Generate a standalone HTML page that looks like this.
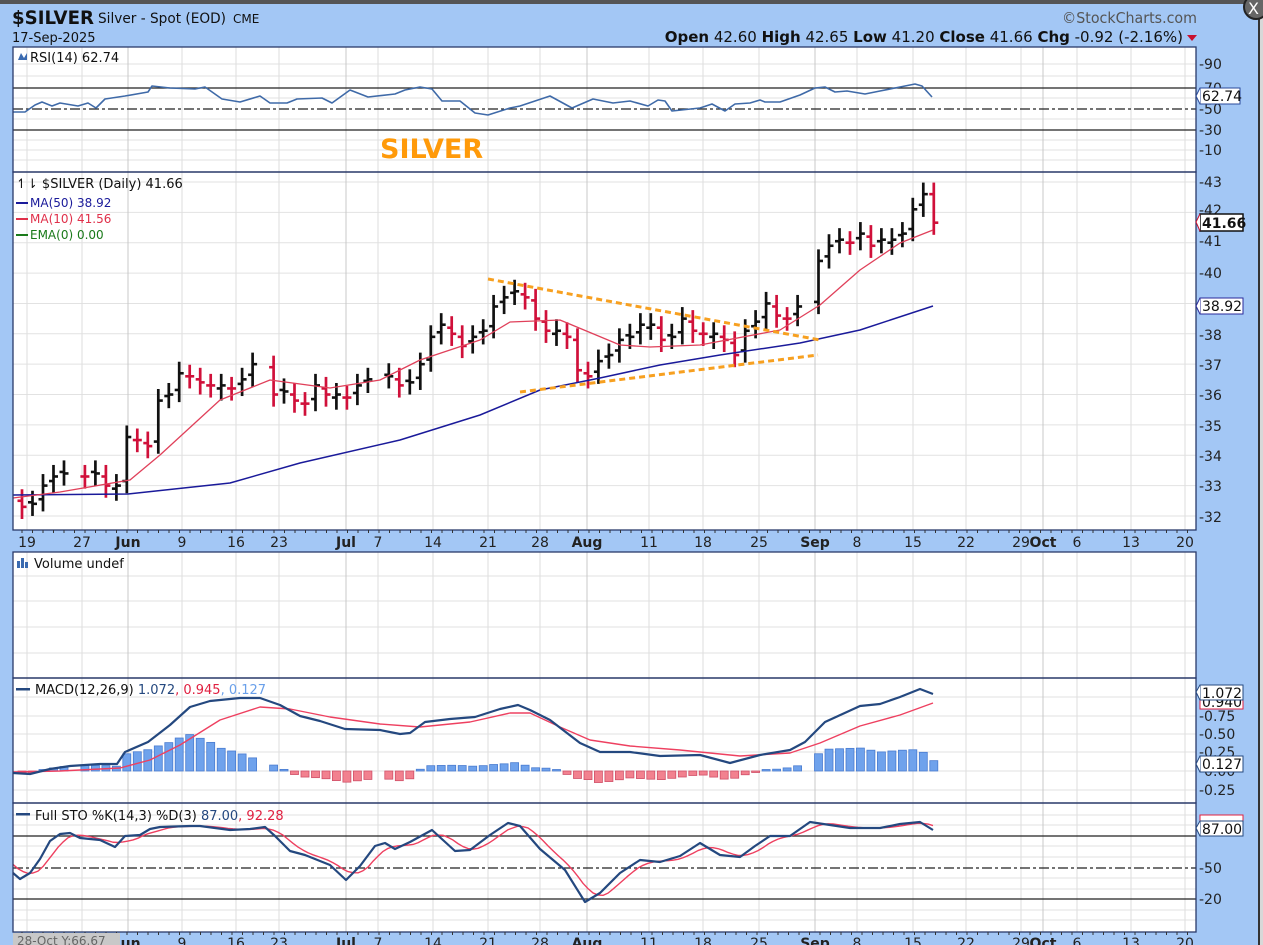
<!DOCTYPE html>
<html><head><meta charset="utf-8">
<style>
html,body{margin:0;padding:0;width:1263px;height:945px;overflow:hidden;background:#a3c7f5;font-family:"Liberation Sans",sans-serif}
svg{position:absolute;left:0;top:0}
text{font-family:"DejaVu Sans","Liberation Sans",sans-serif}
.ax{font-family:"Liberation Sans",sans-serif;font-size:14px;fill:#222}
.lg{font-family:"DejaVu Sans",sans-serif;font-size:13px}
</style></head><body>
<svg id="s" width="1263" height="945" xmlns="http://www.w3.org/2000/svg">
<rect x="0" y="0" width="1263" height="945" fill="#a3c7f5"/>
<rect x="0" y="0" width="1263" height="4" fill="#555"/>
<rect x="1258" y="0" width="2" height="945" fill="#333"/>
<rect x="1260" y="0" width="3" height="945" fill="#d8d8d8"/>
<circle cx="1256" cy="7" r="12" fill="#666" stroke="#222" stroke-width="2"/>
<text x="1248" y="14" font-size="16" fill="#fff" font-family="Liberation Sans">X</text>
<!-- header -->
<text x="12" y="24" font-size="19" font-weight="bold" fill="#111" font-family="Liberation Sans" textLength="82" lengthAdjust="spacingAndGlyphs">$SILVER</text>
<text x="98" y="23" font-size="14" fill="#111" font-family="Liberation Sans" textLength="128" lengthAdjust="spacingAndGlyphs">Silver - Spot (EOD)</text>
<text x="233" y="23" font-size="12" fill="#111" font-family="DejaVu Sans">CME</text>
<text x="12" y="42" font-size="13" fill="#111" font-family="Liberation Sans">17-Sep-2025</text>
<text x="1062" y="23" font-size="15" fill="#555" font-family="Liberation Sans" textLength="135" lengthAdjust="spacingAndGlyphs">©StockCharts.com</text>
<text x="1183" y="42" font-size="15" fill="#111" text-anchor="end" font-family="Liberation Sans"><tspan font-weight="bold">Open</tspan> 42.60  <tspan font-weight="bold">High</tspan> 42.65  <tspan font-weight="bold">Low</tspan> 41.20  <tspan font-weight="bold">Close</tspan> 41.66  <tspan font-weight="bold">Chg</tspan> -0.92 (-2.16%)</text>
<polygon points="1187,35 1197,35 1192,41" fill="#c8102e"/>
<g id="g"></g>
</svg>
<script>
const S=document.getElementById('g');const NS='http://www.w3.org/2000/svg';
function el(t,a,p){const e=document.createElementNS(NS,t);for(const k in a)e.setAttribute(k,a[k]);(p||S).appendChild(e);return e;}
function pl(pts,st,w,extra){const a={points:pts.map(p=>p.join(',')).join(' '),fill:'none',stroke:st,'stroke-width':w||1.5,'stroke-linejoin':'round'};Object.assign(a,extra||{});return el('polyline',a);}
const L=13,R=1196;
const panels=[[47,172],[172,530],[552,678],[678,803],[803,932]];
const vx=[27,82,128,182,236,279,346,378,433,488,540,587,649,703,759,815,857,913,966,1021,1043,1077,1131,1185];
panels.forEach(p=>el('rect',{x:L,y:p[0],width:R-L,height:p[1]-p[0],fill:'#fff'}));
function hg(ys){ys.forEach(y=>el('line',{x1:L,x2:R,y1:y,y2:y,stroke:'#e2e2e2','stroke-width':1}));}
hg([64,76,88,98,119,140,150,160]);
let py=p=>182+(43-p)*30.36;
for(let p=32;p<=43;p++)hg([py(p)]);
hg([576,601,627,653]);
hg([697,716,734,752,771,790]);
hg([815,825,846,857,878,889,910,920]);
panels.forEach(p=>vx.forEach(x=>el('line',{x1:x,x2:x,y1:p[0],y2:p[1],stroke:(x==128||x==346||x==587||x==815||x==1043)?'#c8c8c8':'#dedede','stroke-width':1})));
function rl(y,d){el('line',{x1:L,x2:R,y1:y,y2:y,stroke:'#222','stroke-width':1.3,'stroke-dasharray':d||''});}
rl(88);rl(109,'10,3,3,3');rl(130);
rl(836);rl(868,'10,3,3,3');rl(899);
pl([[13,112],[25,112],[35,105],[42,102],[52,106],[60,103],[78,106],[88,103],[96,108],[105,99],[125,96],[148,92],[152,86],[170,88],[195,89],[205,87],[222,99],[240,102],[260,96],[270,103],[287,103],[297,99],[322,98],[332,103],[350,90],[368,97],[395,94],[405,90],[420,87],[432,89],[442,101],[460,101],[475,113],[488,115],[510,108],[520,106],[550,96],[572,108],[593,99],[613,103],[630,101],[648,106],[658,100],[665,101],[672,111],[700,108],[712,104],[725,111],[735,104],[750,103],[760,100],[765,102],[780,102],[800,95],[815,88],[825,87],[835,92],[847,91],[865,94],[880,91],[900,87],[915,84],[922,86],[932,97]],'#3f6aa8',1.6);
const W=[[32.3,32.4,33.0,33.3,33.4],[null,33.3,33.4,33.0,33.0],[34.6,34.5,34.3,35.8,36.0],[36.7,36.6,36.4,36.3,36.3],[36.2,36.5,37.0,null,36.0],[36.1,35.8,35.7,36.3,36.0],[36.0,35.9,36.3,36.5,null],[36.6,36.3,36.4,37.0,37.9],[38.3,38.0,37.6,37.9,38.1],[38.9,39.2,39.4,39.2,38.5],[38.1,38.1,37.9,36.8,36.6],[37.1,37.3,37.8,37.9,38.3],[38.3,37.8,37.9,38.5,38.1],[38.0,38.0,37.8,37.3,38.1],[38.4,39.0,38.6,38.5,38.9],[null,40.4,40.9,41.1,41.0],[41.3,40.9,41.1,41.1,41.3],[42.1,42.6,41.66]];
let prev=32.6,days=[];
W.forEach((w,k)=>w.forEach((c,d)=>{if(c==null)return;const x=22+k*52.4+d*10.5;days.push(x);
 let o=prev+(c>prev?0.15:-0.1);if(k==17&&d==2)o=42.6;
 const h=Math.max(o,c)+0.38,l=Math.min(o,c)-0.4;const col=c<prev?'#d0103a':'#111';
 el('line',{x1:x,x2:x,y1:py(h),y2:py(l),stroke:col,'stroke-width':2.7});
 el('line',{x1:x-4.5,x2:x,y1:py(o),y2:py(o),stroke:col,'stroke-width':2.6});
 el('line',{x1:x,x2:x+4.5,y1:py(c),y2:py(c),stroke:col,'stroke-width':2.6});
 prev=c;}));
pl([[13,495],[128,494],[230,483],[300,463],[400,440],[480,415],[540,390],[600,378],[660,365],[720,355],[800,343],[860,330],[933,306]],'#1a1a9a',1.5);
pl([[13,498],[60,492],[130,480],[160,455],[220,400],[270,380],[330,388],[380,380],[420,360],[480,340],[510,322],[560,320],[620,345],[650,347],[700,345],[780,330],[820,305],[860,270],[900,243],[933,230]],'#e0405a',1.3);
el('line',{x1:488,y1:279,x2:820,y2:340,stroke:'#f7a020','stroke-width':3,'stroke-dasharray':'6,4'});
el('line',{x1:520,y1:392,x2:818,y2:355,stroke:'#f7a020','stroke-width':3,'stroke-dasharray':'6,4'});
const M=[[13,773],[30,774],[50,769],[70,766],[100,764],[117,764],[125,752],[148,742],[170,725],[190,707],[210,701],[240,698],[260,698],[280,705],[300,716],[320,721],[345,729],[380,730],[400,734],[410,733],[425,722],[450,719],[475,717],[500,709],[518,705],[530,710],[550,720],[580,743],[600,752],[630,752],[660,756],[700,755],[730,763],[760,755],[790,750],[805,742],[825,722],[860,706],[880,704],[900,697],[920,689],[933,694]];
const G=[[13,772],[60,771],[120,768],[150,760],[180,745],[220,720],[260,707],[290,709],[330,717],[380,724],[420,727],[470,722],[510,713],[530,713],[560,727],[590,740],[630,746],[680,750],[740,756],[790,753],[820,743],[860,726],[900,715],[933,703]];
function iv(a,x){for(let i=1;i<a.length;i++)if(x<=a[i][0]){const t=(x-a[i-1][0])/(a[i][0]-a[i-1][0]);return a[i-1][1]+t*(a[i][1]-a[i-1][1]);}return a[a.length-1][1];}
days.forEach(x=>{let h=(iv(G,x)-iv(M,x))*1.15;if(Math.abs(h)<1.5)h=h<0?-1.5:1.5;
 if(h>0)el('rect',{x:x-4,y:771-h,width:8,height:h,fill:'#6fa2ec',stroke:'#4a7cd0','stroke-width':0.8});
 else el('rect',{x:x-4,y:771,width:8,height:-h,fill:'#f2818f',stroke:'#d05068','stroke-width':0.8});});
pl(G,'#ee4060',1.4);pl(M,'#24487f',2.2);
const K=[[13,873],[20,879],[30,873],[40,859],[50,841],[60,834],[70,833],[80,838],[100,840],[115,847],[125,836],[140,835],[150,829],[160,827],[190,826],[200,826],[230,830],[250,829],[265,827],[275,836],[290,851],[305,855],[330,865],[346,880],[360,866],[375,846],[385,843],[395,849],[410,842],[432,830],[455,851],[470,850],[490,835],[508,823],[520,826],[540,849],[565,870],[585,902],[600,893],[620,873],[640,860],[660,862],[680,856],[700,843],[720,855],[740,857],[755,846],[770,836],[790,836],[810,822],[830,825],[850,828],[880,828],[900,824],[920,822],[933,830]];
const D=[];for(let x=13;x<=933;x+=5){const v=(iv(K,x)+iv(K,x-10)+iv(K,x-20))/3;D.push([x,v]);}
pl(D,'#ee4060',1.4);pl(K,'#24487f',2.2);
panels.forEach(p=>el('rect',{x:L,y:p[0],width:R-L,height:p[1]-p[0],fill:'none',stroke:'#2a3a6a','stroke-width':1.3}));
[[530,552],[932,945]].forEach(b=>{for(let x=22;x<R;x+=10.5){el('line',{x1:x,x2:x,y1:b[0],y2:b[0]+3,stroke:'#333','stroke-width':1});}});
</script>
<svg width="1263" height="945" xmlns="http://www.w3.org/2000/svg" style="pointer-events:none">
<path d="M18,60 l3,-7 l3,5 l3,-5 v7 z" fill="#3a6ab0"/>
<text x="30" y="62" class="lg" fill="#111">RSI(14) 62.74</text>
<text x="380" y="158" font-size="27" font-weight="bold" fill="#ff9a0a" font-family="Liberation Sans">SILVER</text>
<text x="16" y="188" class="lg" fill="#111">↿⇂ $SILVER (Daily) 41.66</text>
<rect x="16" y="202" width="12" height="2" fill="#1a1a9a"/><text x="30" y="207" font-size="12" fill="#1a1a9a" font-family="DejaVu Sans">MA(50) 38.92</text>
<rect x="16" y="218" width="12" height="2" fill="#e0304a"/><text x="30" y="223" font-size="12" fill="#e0304a" font-family="DejaVu Sans">MA(10) 41.56</text>
<rect x="16" y="234" width="12" height="2" fill="#1a7a1a"/><text x="30" y="239" font-size="12" fill="#1a7a1a" font-family="DejaVu Sans">EMA(0) 0.00</text>
<rect x="17" y="561" width="3" height="7" fill="#3a6ab0"/><rect x="21" y="558" width="3" height="10" fill="#3a6ab0"/><rect x="25" y="562" width="3" height="6" fill="#3a6ab0"/>
<text x="34" y="568" class="lg" fill="#111">Volume undef</text>
<rect x="16" y="688" width="14" height="2.5" fill="#24487f"/>
<text x="35" y="694" class="lg" fill="#111">MACD(12,26,9) <tspan fill="#24487f">1.072</tspan><tspan fill="#e02040">, 0.945</tspan><tspan fill="#6aa0ea">, 0.127</tspan></text>
<rect x="16" y="813" width="14" height="2.5" fill="#24487f"/>
<text x="35" y="820" class="lg" fill="#111">Full STO %K(14,3) %D(3) <tspan fill="#24487f">87.00</tspan><tspan fill="#e02040">, 92.28</tspan></text>
<g class="ax" font-size="14" text-anchor="middle" font-family="Liberation Sans">
<text x="27" y="547">19</text><text x="82" y="547">27</text><text x="128" y="547" font-weight="bold">Jun</text><text x="182" y="547">9</text><text x="236" y="547">16</text><text x="279" y="547">23</text><text x="346" y="547" font-weight="bold">Jul</text><text x="378" y="547">7</text><text x="433" y="547">14</text><text x="488" y="547">21</text><text x="540" y="547">28</text><text x="587" y="547" font-weight="bold">Aug</text><text x="649" y="547">11</text><text x="703" y="547">18</text><text x="759" y="547">25</text><text x="815" y="547" font-weight="bold">Sep</text><text x="857" y="547">8</text><text x="913" y="547">15</text><text x="966" y="547">22</text><text x="1021" y="547">29</text><text x="1043" y="547" font-weight="bold">Oct</text><text x="1077" y="547">6</text><text x="1131" y="547">13</text><text x="1185" y="547">20</text>
</g>
<g class="ax" font-size="14" text-anchor="middle" font-family="Liberation Sans">
<text x="128" y="948" font-weight="bold">Jun</text><text x="182" y="948">9</text><text x="236" y="948">16</text><text x="279" y="948">23</text><text x="346" y="948" font-weight="bold">Jul</text><text x="378" y="948">7</text><text x="433" y="948">14</text><text x="488" y="948">21</text><text x="540" y="948">28</text><text x="587" y="948" font-weight="bold">Aug</text><text x="649" y="948">11</text><text x="703" y="948">18</text><text x="759" y="948">25</text><text x="815" y="948" font-weight="bold">Sep</text><text x="857" y="948">8</text><text x="913" y="948">15</text><text x="966" y="948">22</text><text x="1021" y="948">29</text><text x="1043" y="948" font-weight="bold">Oct</text><text x="1077" y="948">6</text><text x="1131" y="948">13</text><text x="1185" y="948">20</text>
</g>
<rect x="13" y="933" width="107" height="12" fill="#c8c8c8"/>
<text x="17" y="945" font-size="12" fill="#666" font-family="DejaVu Sans">28-Oct Y:66.67</text>
<g font-size="14" fill="#222" font-family="Liberation Sans">
<text x="1199" y="69">-90</text><text x="1199" y="93">-70</text><text x="1199" y="114">-50</text><text x="1199" y="135">-30</text><text x="1199" y="155">-10</text>
<text x="1199" y="187">-43</text><text x="1199" y="215">-42</text><text x="1199" y="246">-41</text><text x="1199" y="278">-40</text><text x="1199" y="340">-38</text><text x="1199" y="370">-37</text><text x="1199" y="400">-36</text><text x="1199" y="431">-35</text><text x="1199" y="461">-34</text><text x="1199" y="491">-33</text><text x="1199" y="522">-32</text>
<text x="1199" y="721">-0.75</text><text x="1199" y="739">-0.50</text><text x="1199" y="757">-0.25</text><text x="1199" y="776">-0.00</text><text x="1199" y="795">-0.25</text>
<text x="1199" y="873">-50</text><text x="1199" y="904">-20</text>
</g>
<g font-family="Liberation Sans" font-size="14">
<rect x="1200" y="88" width="40" height="16" fill="#fff" stroke="#2a4a9a"/><path d="M1200,88 l-4,8 l4,8" fill="#fff" stroke="#2a4a9a"/><text x="1202" y="101" fill="#111">62.74</text>
<rect x="1200" y="214" width="43" height="17" fill="#fff" stroke="#111" stroke-width="1.5"/><path d="M1200,214 l-4,8 l4,9" fill="#fff" stroke="#c8102e"/><text x="1202" y="228" fill="#111" font-weight="bold">41.66</text>
<rect x="1200" y="298" width="43" height="16" fill="#fff" stroke="#2a2a9a"/><path d="M1200,298 l-4,8 l4,8" fill="#fff" stroke="#2a2a9a"/><text x="1202" y="311" fill="#111">38.92</text>
<rect x="1200" y="695" width="43" height="14" fill="#fff" stroke="#e02040"/><text x="1202" y="707" fill="#111">0.940</text>
<rect x="1200" y="685" width="43" height="15" fill="#fff" stroke="#24487f"/><path d="M1200,685 l-4,7 l4,8" fill="#fff" stroke="#24487f"/><text x="1202" y="698" fill="#111">1.072</text>
<rect x="1200" y="756" width="43" height="16" fill="#fff" stroke="#24487f"/><path d="M1200,756 l-4,8 l4,8" fill="#fff" stroke="#24487f"/><text x="1202" y="769" fill="#111">0.127</text>
<rect x="1200" y="815" width="43" height="12" fill="#fff" stroke="#e02040"/>
<rect x="1200" y="821" width="43" height="15" fill="#fff" stroke="#24487f"/><path d="M1200,821 l-4,7 l4,8" fill="#fff" stroke="#24487f"/><text x="1202" y="834" fill="#111">87.00</text>
</g>
</svg>
</body></html>
